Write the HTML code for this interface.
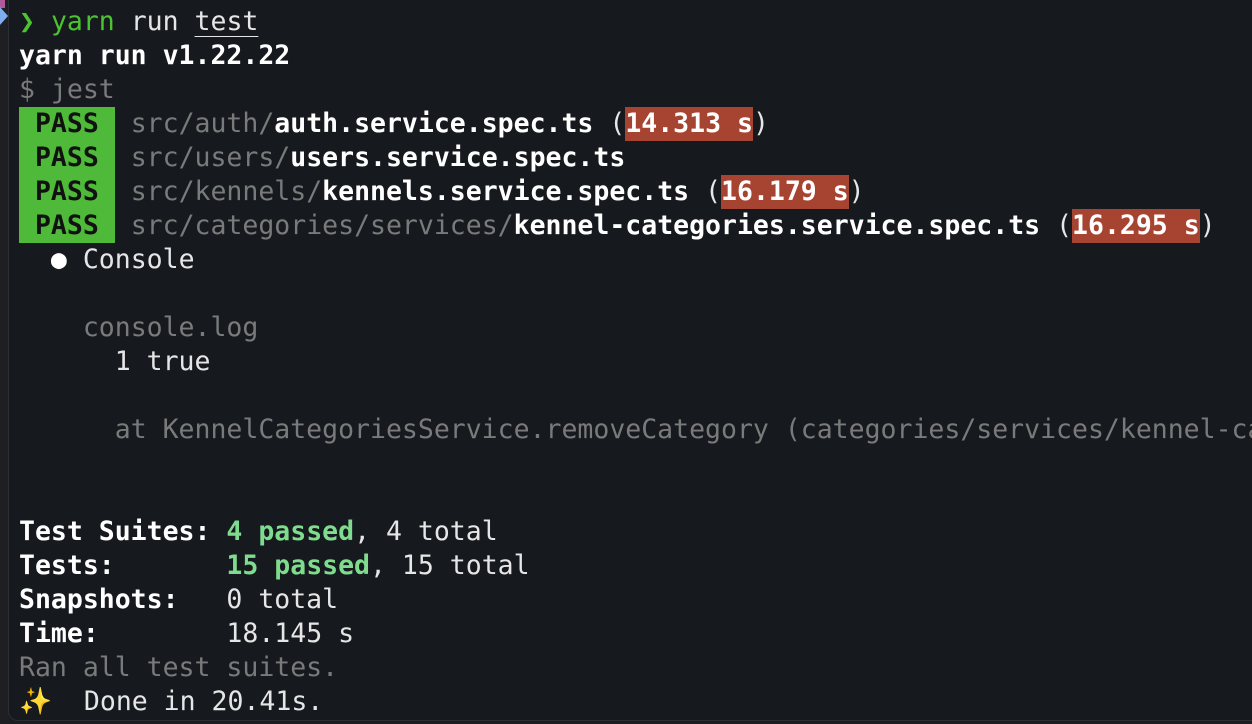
<!DOCTYPE html>
<html><head><style>
html,body{margin:0;padding:0;width:1252px;height:724px;overflow:hidden;background:#1c1d21;}
.side{position:absolute;left:0;top:0;width:9px;height:724px;background:#1e1f23;}
.mark{position:absolute;left:0;top:0;width:5px;height:8px;background:#b05a9a;}
.panel{position:absolute;left:8px;top:-10px;width:1260px;height:731px;background:#16191e;border:1px solid #2c2e33;border-radius:10px;box-sizing:border-box;overflow:hidden;}
pre{position:absolute;left:10px;top:14px;margin:0;font-family:"DejaVu Sans Mono","Liberation Mono",monospace;font-size:26.5px;line-height:34px;color:#e6e6e6;white-space:pre;}
.b{font-weight:bold;color:#fff}
.g{color:#7a7a7a}
.gr{color:#4cc431;font-weight:bold}
.pass{display:inline-block;height:34px;vertical-align:top;background:#4fba39;color:#111;font-weight:bold}
.red{display:inline-block;height:34px;vertical-align:top;background:#a74431;color:#fff;font-weight:bold}
.ok{color:#7fdc8e;font-weight:bold}
.u{text-decoration:underline;text-underline-offset:6px;text-decoration-thickness:1px}
.arr{position:absolute;left:0;top:7px;width:0;height:0;border-top:9px solid transparent;border-bottom:9px solid transparent;border-left:8px solid #7eaef0;}
</style></head><body>
<div class="side"></div>
<div class="mark"></div>
<div class="panel">
<pre><span class="gr">❯</span> <span class="gr" style="font-weight:normal">yarn</span> run <span class="u">test</span>
<span class="b">yarn run v1.22.22</span>
<span class="g">$ jest</span>
<span class="pass"> PASS </span> <span class="g">src/auth/</span><span class="b">auth.service.spec.ts</span> (<span class="red">14.313 s</span>)
<span class="pass"> PASS </span> <span class="g">src/users/</span><span class="b">users.service.spec.ts</span>
<span class="pass"> PASS </span> <span class="g">src/kennels/</span><span class="b">kennels.service.spec.ts</span> (<span class="red">16.179 s</span>)
<span class="pass"> PASS </span> <span class="g">src/categories/services/</span><span class="b">kennel-categories.service.spec.ts</span> (<span class="red">16.295 s</span>)
  <span class="b">●</span> Console

    <span class="g">console.log</span>
      1 true

      <span class="g">at KennelCategoriesService.removeCategory (categories/services/kennel-categories.service.ts:55:13)</span>


<span class="b">Test Suites:</span> <span class="ok">4 passed</span>, 4 total
<span class="b">Tests:</span>       <span class="ok">15 passed</span>, 15 total
<span class="b">Snapshots:</span>   0 total
<span class="b">Time:</span>        18.145 s
<span class="g">Ran all test suites.</span>
<span style="color:#f5c84a">✨</span>  Done in 20.41s.</pre>
</div>
<div class="arr"></div>
</body></html>
